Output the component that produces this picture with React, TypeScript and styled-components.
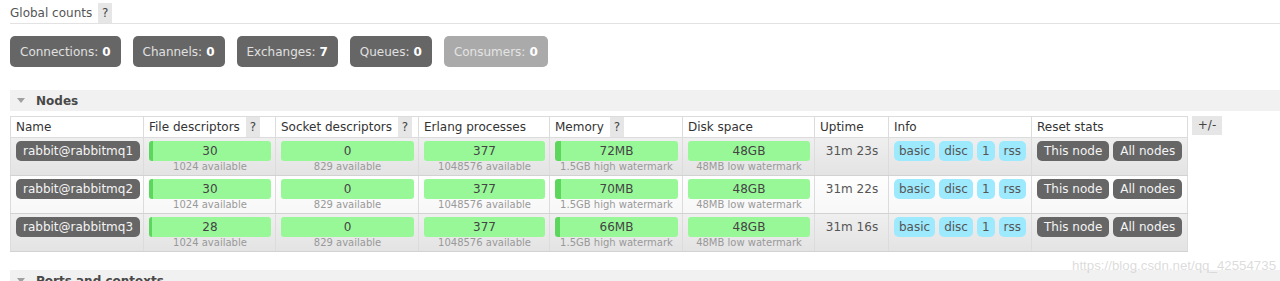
import React from 'react';
import styled, {createGlobalStyle} from 'styled-components';

const GlobalStyle = createGlobalStyle`
    body {
        margin: 0;
        background: #fff;
        font-family: "DejaVu Sans", Verdana, sans-serif;
        font-size: 12px;
        color: #444;
    }
`;

const Page = styled.div`
    position: relative;
    height: 281px;
    overflow: hidden;
    padding-left: 10px;
`;

const Heading = styled.div`
    display: flex;
    align-items: center;
    margin-top: 3px;
    height: 20px;
    line-height: 20px;
    color: #555;
    border-bottom: 1px solid #e2e2e2;
`;

const Help = styled.span`
    display: inline-block;
    width: 14px;
    height: 20px;
    line-height: 20px;
    margin-left: 6px;
    text-align: center;
    background: #e6e6e6;
    color: #444;
    vertical-align: top;
`;

const Counts = styled.div`
    display: flex;
    gap: 12px;
    margin-top: 12px;
`;

const Count = styled.div<{$dim?: boolean}>`
    display: flex;
    align-items: center;
    height: 31px;
    padding: 0 10px;
    border-radius: 5px;
    background: ${({$dim}) => ($dim ? '#aaa' : '#666')};
    color: ${({$dim}) => ($dim ? '#e4e4e4' : '#e0e0e0')};

    b {
        margin-left: 4px;
        color: #fff;
        font-weight: bold;
    }
`;

const SectionBar = styled.div<{$gap: number}>`
    display: flex;
    align-items: center;
    gap: 11px;
    height: 21px;
    margin-top: ${({$gap}) => $gap}px;
    padding-left: 7px;
    background: #f1f1f1;
    font-weight: bold;
    color: #484848;
`;

const Arrow = styled.span`
    width: 0;
    height: 0;
    border-left: 4px solid transparent;
    border-right: 4px solid transparent;
    border-top: 5px solid #a0a0a0;
`;

const TableRow = styled.div`
    display: flex;
    align-items: flex-start;
    gap: 4px;
    margin-top: 5px;
`;

const Table = styled.table`
    border-collapse: collapse;
    table-layout: fixed;
    width: 1177px;
    font-size: 12px;
    border: 1px solid #dcdcdc;
`;

const Th = styled.th`
    height: 20px;
    padding: 0 0 0 5px;
    text-align: left;
    font-weight: normal;
    color: #333;
    background: #fff;
    border: 1px solid #dcdcdc;
    white-space: nowrap;
    line-height: 20px;
`;

const Tr = styled.tr<{$alt: boolean}>`
    background: ${({$alt}) =>
        $alt ? 'linear-gradient(#efefef, #e3e3e3)' : 'linear-gradient(#fefefe, #f7f7f7)'};
`;

const Td = styled.td<{$center?: boolean}>`
    padding: 3px 4px 2px 5px;
    vertical-align: top;
    border-left: 1px solid #dcdcdc;
    border-right: 1px solid #dcdcdc;
    border-bottom: 1px solid #d2d2d2;
    text-align: ${({$center}) => ($center ? 'center' : 'left')};
    line-height: 20px;
    color: #555;
    white-space: nowrap;
`;

const Pill = styled.span<{$kind: 'dark' | 'info'}>`
    display: inline-block;
    height: 20px;
    line-height: 20px;
    padding: 0 ${({$kind}) => ($kind === 'dark' ? 7 : 5)}px;
    border-radius: 5px;
    background: ${({$kind}) => ($kind === 'dark' ? '#666' : '#9de9fd')};
    color: ${({$kind}) => ($kind === 'dark' ? '#f4f4f4' : '#555')};

    & + & {
        margin-left: 4px;
    }
`;

const Bar = styled.div<{$used: number}>`
    height: 20px;
    line-height: 20px;
    border-radius: 3px;
    text-align: center;
    color: #444;
    background: linear-gradient(90deg, #5cd65c ${({$used}) => $used}%, #98f898 ${({$used}) => $used}%);
`;

const Sub = styled.div`
    font-size: 10px;
    line-height: 12px;
    text-align: center;
    color: #999;
`;

const Toggle = styled.div`
    width: 30px;
    height: 19px;
    line-height: 19px;
    text-align: center;
    background: #e6e6e6;
    color: #444;
`;

const Watermark = styled.div`
    position: absolute;
    left: 1072px;
    top: 258px;
    font-family: "Liberation Sans", Arial, sans-serif;
    font-size: 13.3px;
    white-space: nowrap;
    color: rgba(190, 190, 190, 0.55);
`;

type Node = {
    name: string;
    fd: number;
    erl: number;
    mem: number;
    uptime: string;
};

const nodes: Node[] = [
    {name: 'rabbit@rabbitmq1', fd: 30, erl: 377, mem: 72, uptime: '31m 23s'},
    {name: 'rabbit@rabbitmq2', fd: 30, erl: 377, mem: 70, uptime: '31m 22s'},
    {name: 'rabbit@rabbitmq3', fd: 28, erl: 377, mem: 66, uptime: '31m 16s'},
];

const counts = [
    {label: 'Connections', value: 0},
    {label: 'Channels', value: 0},
    {label: 'Exchanges', value: 7},
    {label: 'Queues', value: 0},
    {label: 'Consumers', value: 0, dim: true},
];

const widths = [133, 132, 143, 131, 133, 132, 74, 143, 156];

function App() {
    return (
        <Page>
            <GlobalStyle/>
            <Heading>
                Global counts<Help>?</Help>
            </Heading>
            <Counts>
                {counts.map((c) => (
                    <Count key={c.label} $dim={c.dim}>
                        {c.label}: <b>{c.value}</b>
                    </Count>
                ))}
            </Counts>

            <SectionBar $gap={23}>
                <Arrow/>
                Nodes
            </SectionBar>
            <TableRow>
                <Table>
                    <colgroup>
                        {widths.map((w, i) => <col key={i} style={{width: w}}/>)}
                    </colgroup>
                    <thead>
                        <tr>
                            <Th>Name</Th>
                            <Th>File descriptors<Help>?</Help></Th>
                            <Th>Socket descriptors<Help>?</Help></Th>
                            <Th>Erlang processes</Th>
                            <Th>Memory<Help>?</Help></Th>
                            <Th>Disk space</Th>
                            <Th>Uptime</Th>
                            <Th>Info</Th>
                            <Th>Reset stats</Th>
                        </tr>
                    </thead>
                    <tbody>
                        {nodes.map((n, i) => (
                            <Tr key={n.name} $alt={i % 2 === 0}>
                                <Td><Pill $kind="dark">{n.name}</Pill></Td>
                                <Td>
                                    <Bar $used={(n.fd / 1024) * 100}>{n.fd}</Bar>
                                    <Sub>1024 available</Sub>
                                </Td>
                                <Td>
                                    <Bar $used={0}>0</Bar>
                                    <Sub>829 available</Sub>
                                </Td>
                                <Td>
                                    <Bar $used={0}>{n.erl}</Bar>
                                    <Sub>1048576 available</Sub>
                                </Td>
                                <Td>
                                    <Bar $used={(n.mem / 1536) * 100}>{n.mem}MB</Bar>
                                    <Sub>1.5GB high watermark</Sub>
                                </Td>
                                <Td>
                                    <Bar $used={0}>48GB</Bar>
                                    <Sub>48MB low watermark</Sub>
                                </Td>
                                <Td $center>{n.uptime}</Td>
                                <Td>
                                    <Pill $kind="info">basic</Pill>
                                    <Pill $kind="info">disc</Pill>
                                    <Pill $kind="info">1</Pill>
                                    <Pill $kind="info">rss</Pill>
                                </Td>
                                <Td>
                                    <Pill $kind="dark">This node</Pill>
                                    <Pill $kind="dark">All nodes</Pill>
                                </Td>
                            </Tr>
                        ))}
                    </tbody>
                </Table>
                <Toggle>+/-</Toggle>
            </TableRow>

            <SectionBar $gap={18}>
                <Arrow/>
                Ports and contexts
            </SectionBar>
            <Watermark>https://blog.csdn.net/qq_42554735</Watermark>
        </Page>
    );
}

export default App;
